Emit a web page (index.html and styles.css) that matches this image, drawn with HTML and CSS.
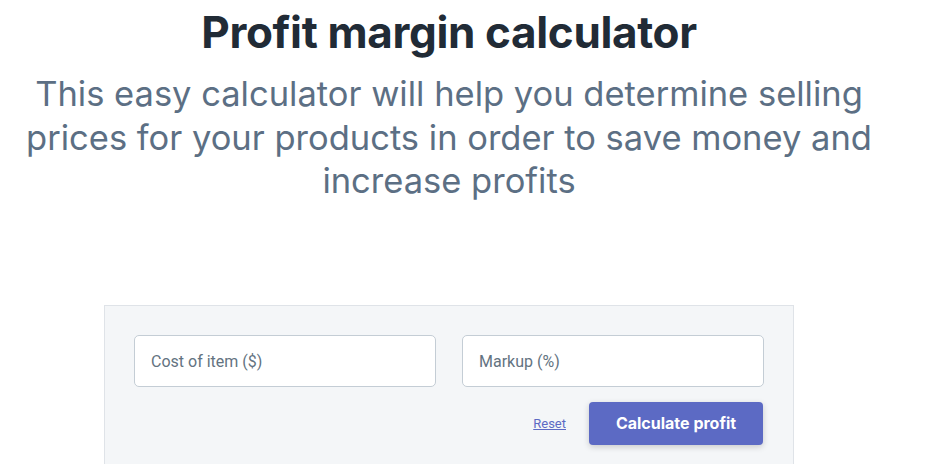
FILE: index.html
```html
<!DOCTYPE html>
<html>
<head>
<meta charset="utf-8">
<link rel="stylesheet" href="styles.css">
</head>
<body>
<main class="page">
  <header class="hero">
    <h1 class="title">Profit margin calculator</h1>
    <p class="subtitle">This easy calculator will help you determine selling prices for your products in order to save money and increase profits</p>
  </header>
  <section class="card">
    <div class="fields">
      <input class="field" type="text" placeholder="Cost of item ($)">
      <input class="field" type="text" placeholder="Markup (%)">
    </div>
    <div class="actions">
      <a class="reset" href="#">Reset</a>
      <button class="calc" type="button">Calculate profit</button>
    </div>
  </section>
</main>
</body>
</html>
```
FILE: styles.css
```css
* { box-sizing: border-box; }
html, body { margin: 0; padding: 0; background: #fff; }
body { font-family: Inter, "Noto Sans", sans-serif; overflow: hidden; }
.page { width: 898px; display: flex; flex-direction: column; align-items: center; }
.hero { text-align: center; padding-top: 4px; }
.title {
  margin: 0;
  font-family: Inter, sans-serif;
  font-weight: 700;
  font-size: 44px;
  line-height: 56px;
  color: #212b36;
  letter-spacing: -0.35px;
}
.subtitle {
  margin: 12px 0 0;
  font-family: Inter, sans-serif;
  font-weight: 400;
  font-size: 34.5px;
  line-height: 43.5px;
  color: #5c6f84;
  width: 898px;
}
.card {
  margin-top: 102px;
  width: 690px;
  background: #f4f6f8;
  border: 1px solid #dfe3e8;
  padding: 29px 29px 40px;
}
.fields { display: flex; gap: 26px; }
.field {
  flex: 1;
  height: 52px;
  border: 1px solid #c4cdd5;
  border-radius: 5px;
  background: #fff;
  padding: 2px 16px 0;
  font-family: Roboto, sans-serif;
  font-size: 16px;
  color: #212b36;
}
.field::placeholder { color: #637381; }
.actions {
  display: flex;
  justify-content: flex-end;
  align-items: center;
  gap: 23px;
  margin: 15px 1px 0 0;
}
.reset {
  font-family: Roboto, sans-serif;
  font-size: 13px;
  color: #5c6ac4;
  text-decoration: underline;
}
.calc {
  width: 174px;
  height: 43px;
  border: 0;
  border-radius: 4px;
  background: #5c6ac4;
  color: #fff;
  font-family: Inter, sans-serif;
  font-weight: 700;
  font-size: 16px;
  box-shadow: 0 2px 6px rgba(0,0,0,0.18);
}
```
